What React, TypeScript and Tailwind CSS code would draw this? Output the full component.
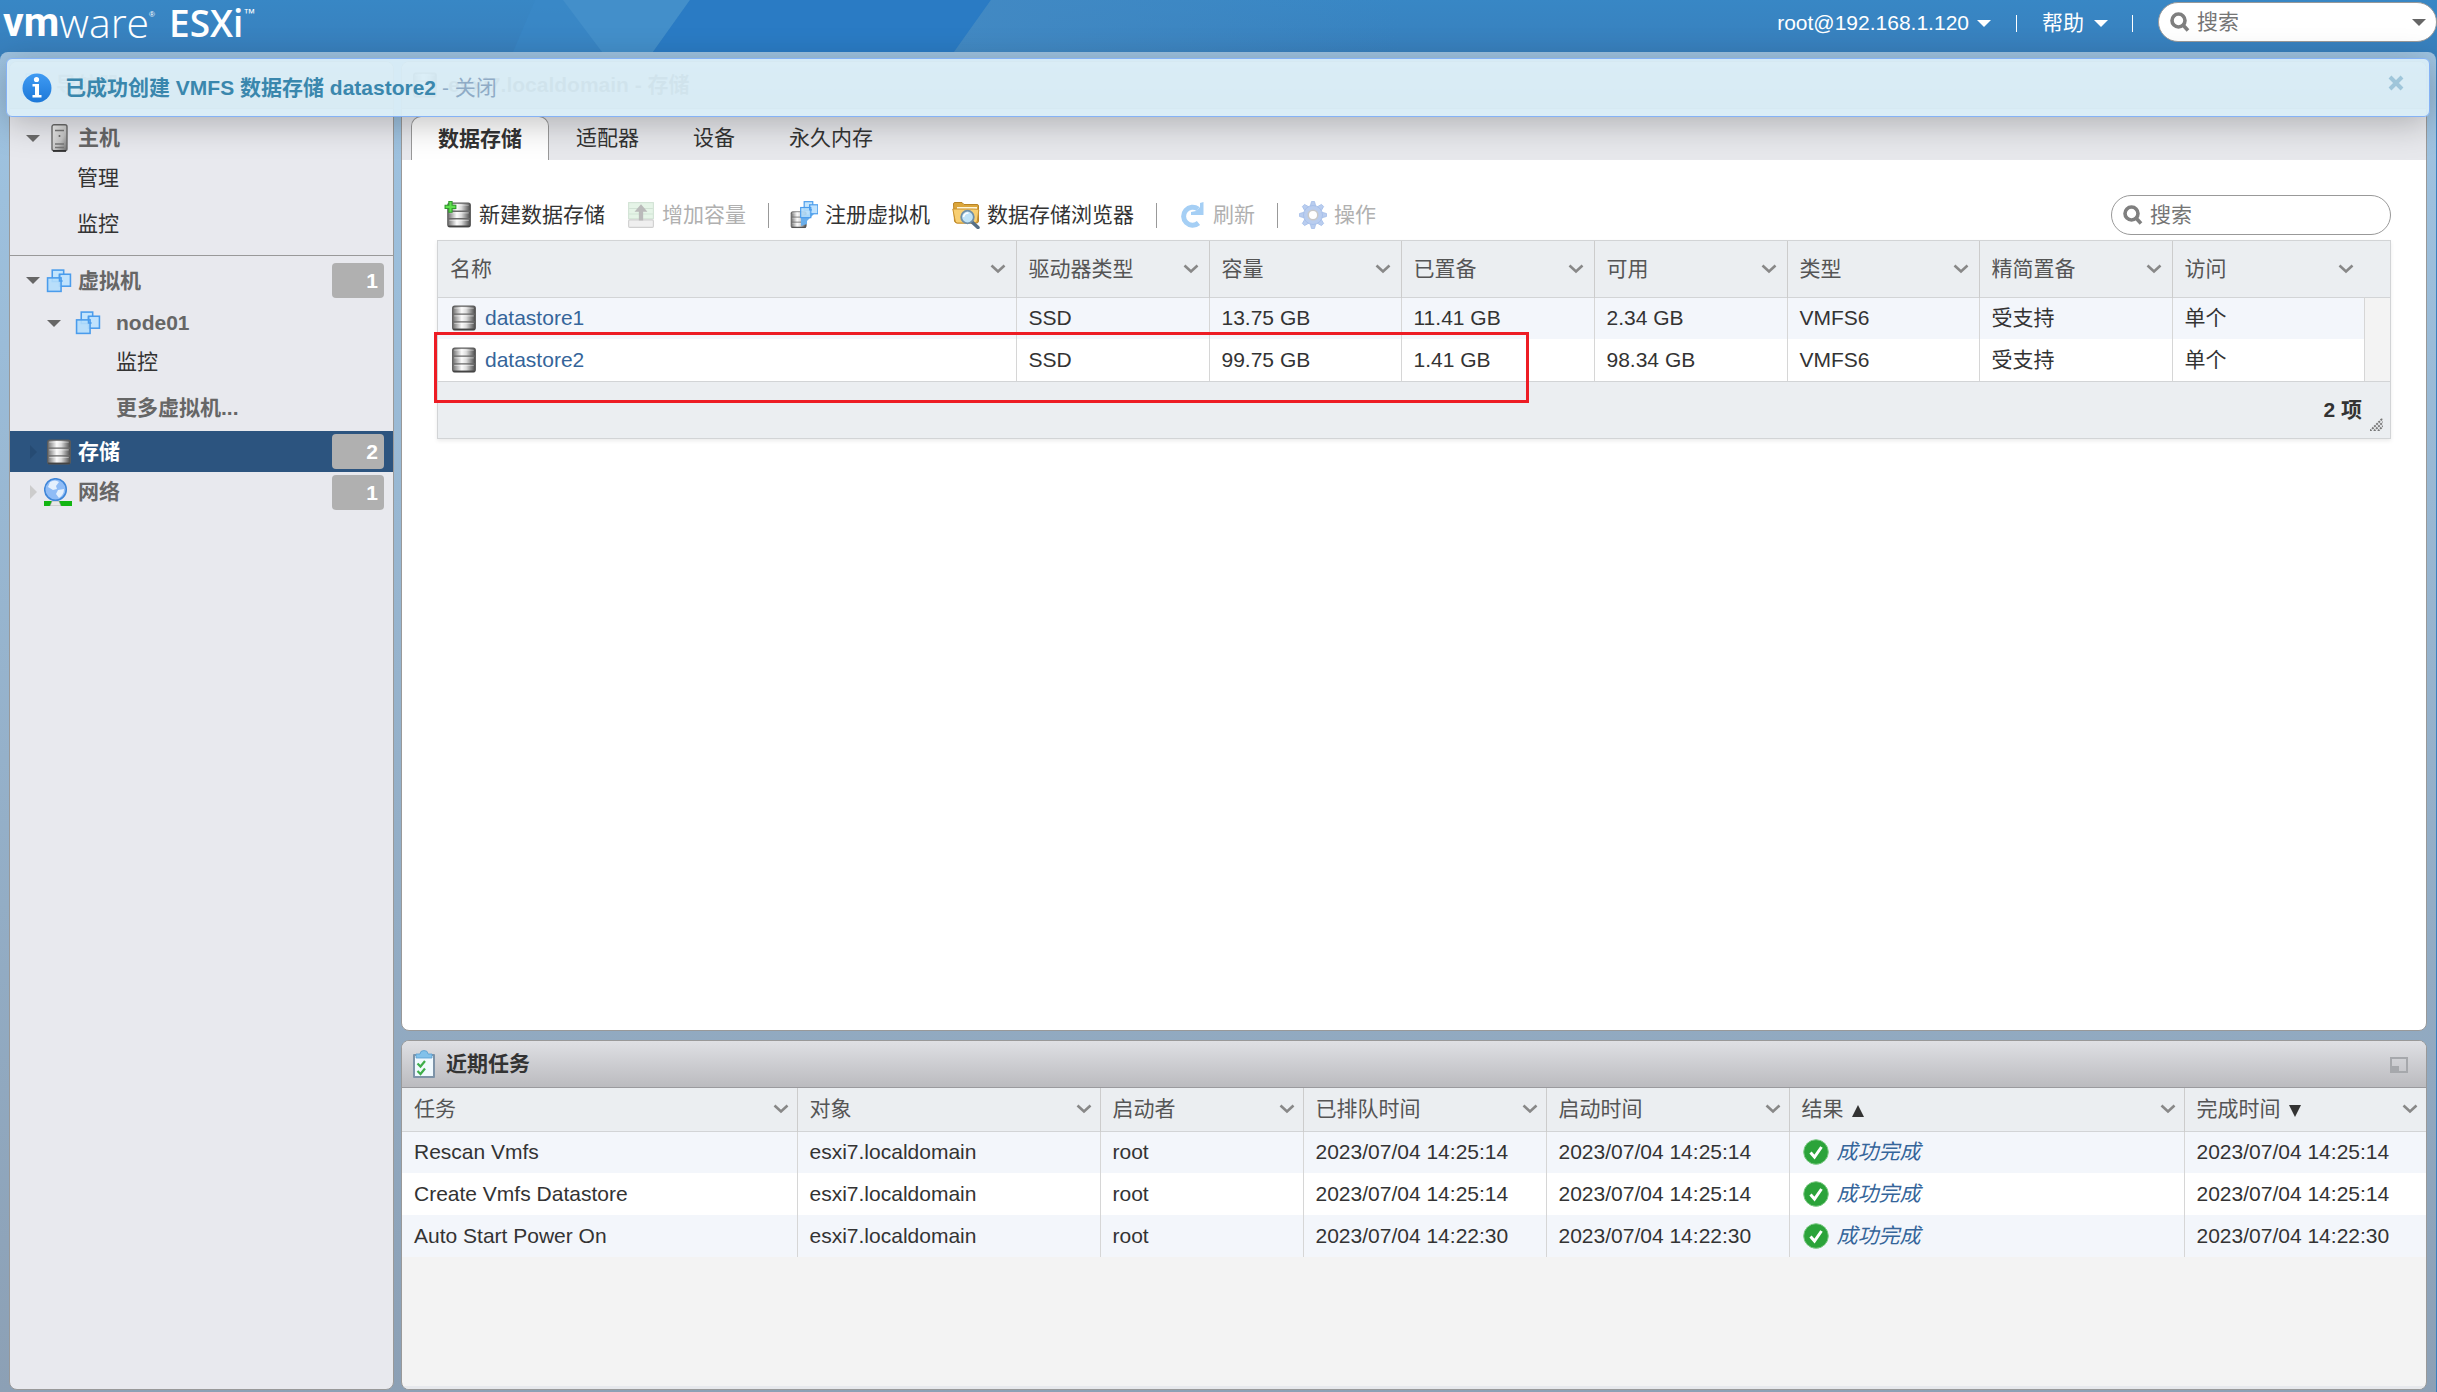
import type { ReactNode } from "react";

const datastores = [
  { name: "datastore1", drive: "SSD", capacity: "13.75 GB", provisioned: "11.41 GB", free: "2.34 GB", type: "VMFS6", thin: "受支持", access: "单个" },
  { name: "datastore2", drive: "SSD", capacity: "99.75 GB", provisioned: "1.41 GB", free: "98.34 GB", type: "VMFS6", thin: "受支持", access: "单个" },
];

const tasks = [
  { name: "Rescan Vmfs", target: "esxi7.localdomain", by: "root", queued: "2023/07/04 14:25:14", started: "2023/07/04 14:25:14", done: "2023/07/04 14:25:14" },
  { name: "Create Vmfs Datastore", target: "esxi7.localdomain", by: "root", queued: "2023/07/04 14:25:14", started: "2023/07/04 14:25:14", done: "2023/07/04 14:25:14" },
  { name: "Auto Start Power On", target: "esxi7.localdomain", by: "root", queued: "2023/07/04 14:22:30", started: "2023/07/04 14:22:30", done: "2023/07/04 14:22:30" },
];

function DiskShapes() {
  return (
    <>
      <defs>
        <linearGradient id="disk" x1="0" x2="1" y1="0" y2="0">
          <stop offset="0" stopColor="#6d6d6d" />
          <stop offset="0.4" stopColor="#fbfbfb" />
          <stop offset="0.6" stopColor="#dcdcdc" />
          <stop offset="1" stopColor="#484848" />
        </linearGradient>
      </defs>
      <rect x="1.5" y="1" width="21" height="22" rx="2" fill="url(#disk)" stroke="#5c5c5c" />
      <path d="M2 8.5h20M2 15.5h20" stroke="#6a6a6a" strokeWidth="1.2" />
      <path d="M3 3h18M3 10h18M3 17h18" stroke="#fff" strokeOpacity=".4" />
      <path d="M2 22.5h20" stroke="#444" strokeWidth="1.5" />
    </>
  );
}

function DatastoreIcon() {
  return (
    <svg className="size-[26px] shrink-0" viewBox="0 0 24 24">
      <DiskShapes />
    </svg>
  );
}

function NewDatastoreIcon() {
  return (
    <svg className="size-7 shrink-0" viewBox="-2 -1 26 26">
      <DiskShapes />
      <path d="M2.5-.5h3V3H9v3H5.500v3.500h-3V6H-1V3h3.500z" fill="#5fe04f" stroke="#2f9a2b" />
    </svg>
  );
}

function IncreaseIcon() {
  return (
    <svg className="size-7 shrink-0 opacity-40" viewBox="0 0 26 26">
      <rect x="1.5" y="1.5" width="23" height="15" fill="#bfe6c4" stroke="#8fb996" />
      <path d="M2 7h22M2 12h22" stroke="#8fb996" />
      <rect x="1.5" y="17.5" width="23" height="7" rx="1" fill="#d8d8d8" stroke="#8a8a8a" />
      <path d="M13 3l6 7h-4v8h-4v-8H7z" fill="#555" />
    </svg>
  );
}

function VmSquares() {
  return (
    <g stroke="#4a9cec" strokeWidth="1.5">
      <rect x="6" y="1.5" width="11" height="11" fill="#c3e5fd" />
      <rect x="13" y="5.5" width="10.5" height="11.5" fill="#bfe2fd" />
      <rect x="1.5" y="9" width="13" height="13" fill="#b3ddfb" fillOpacity=".9" />
      <path d="M13 5.5V12h3" fill="none" />
    </g>
  );
}

function VmIcon() {
  return (
    <svg className="size-[26px] shrink-0" viewBox="0 0 25 24">
      <VmSquares />
    </svg>
  );
}

function RegisterVmIcon() {
  return (
    <svg className="size-7 shrink-0" viewBox="0 0 28 28">
      <g transform="translate(0 10) scale(.72)">
        <DiskShapes />
      </g>
      <path d="M11 15l14-3-8 8v3l-6 2z" fill="#6aaeea" />
      <g transform="translate(9.500 -.5) scale(.78)">
        <VmSquares />
      </g>
    </svg>
  );
}

function BrowserIcon() {
  return (
    <svg className="size-7 shrink-0" viewBox="0 0 28 28">
      <path d="M1.500 3q0-1.500 1.500-1.500h7l2 2h13q1.500 0 1.500 1.500v15q0 2-2 2H5q-2 0-2.500-2z" fill="#dba53a" stroke="#b98425" />
      <path d="M5 6h20v4H5z" fill="#fff6d8" />
      <path d="M.8 8h20.500q5.500 0 5.500 1l-1.500 11q-.5 2-2.500 2H5.500q-2 0-2.300-2z" fill="#f8cf72" stroke="#c8912e" />
      <path d="M20 21l6 5.500" stroke="#566f86" strokeWidth="3.5" strokeLinecap="round" />
      <circle cx="15.5" cy="16" r="6.3" fill="#bfe3f8" stroke="#6f8fa8" strokeWidth="1.8" />
      <path d="M11.500 16q1-4 5-4" stroke="#fff" strokeWidth="1.5" fill="none" />
    </svg>
  );
}

function RefreshIcon() {
  return (
    <svg className="size-7 shrink-0" viewBox="0 0 28 28">
      <path d="M20.500 22A9 9 0 1 1 20 8" fill="none" stroke="#a5cff5" strokeWidth="5" />
      <path d="M25.500 1v13H13v-3l5-1 4-4V2z" fill="#a5cff5" />
    </svg>
  );
}

function GearIcon() {
  return (
    <svg className="size-7 shrink-0" viewBox="0 0 28 28">
      <g fill="#b9cdef" stroke="#a3bde8" strokeWidth=".8">
        {[0, 45, 90, 135, 180, 225, 270, 315].map((a) => (
          <path key={a} d="M11 6l1.500-5.500h3L17 6z" transform={`rotate(${a} 14 14)`} />
        ))}
        <circle cx="14" cy="14" r="9.5" />
      </g>
      <circle cx="14" cy="14" r="4.8" fill="#fff" stroke="#c9c9c9" strokeWidth="1.6" />
    </svg>
  );
}

function HostIcon() {
  return (
    <svg className="h-[28px] w-[26px] shrink-0" viewBox="0 0 26 28">
      <defs>
        <linearGradient id="host" x1="0" x2="1" y1="0" y2="1">
          <stop offset="0" stopColor="#f4f4f4" />
          <stop offset="0.6" stopColor="#c4c4c4" />
          <stop offset="1" stopColor="#6c6c6c" />
        </linearGradient>
      </defs>
      <rect x="6" y=".8" width="15" height="26" rx="2" fill="url(#host)" stroke="#6a6a6a" strokeWidth="1.4" />
      <path d="M9 6.500h9M9 20h9M9 23.500h9" stroke="#777" strokeWidth="1.4" />
      <circle cx="13.5" cy="12" r="1" fill="#666" />
      <path d="M7 27h13" stroke="#222" strokeWidth="1.5" />
    </svg>
  );
}

function NetworkIcon() {
  return (
    <svg className="size-7 shrink-0" viewBox="0 0 28 28">
      <path d="M0 23h28v5H0z" fill="#12b512" />
      <path d="M6 28l2-5h7l2 5z" fill="#e8e8e8" stroke="#999" strokeWidth=".6" />
      <circle cx="11.5" cy="11.5" r="10.8" fill="#8fbcf6" stroke="#3f86d8" strokeWidth="1.5" />
      <path d="M6 4q5-3 9 0l-3 4 1 3-4 1-5-3zM14 12l6-1q0 6-5 9l-3-4z" fill="#e4f0fd" />
    </svg>
  );
}

function InfoIcon() {
  return (
    <svg className="size-[30px] shrink-0" viewBox="0 0 30 30">
      <defs>
        <linearGradient id="info" x1="0" x2="0" y1="0" y2="1">
          <stop offset="0" stopColor="#3f9bf3" />
          <stop offset="1" stopColor="#1d78d8" />
        </linearGradient>
      </defs>
      <circle cx="15" cy="15" r="14.5" fill="url(#info)" />
      <circle cx="14.5" cy="6.5" r="2.6" fill="#fff" />
      <path d="M10.500 11h6.500v11h2.500v2.500h-9V22H13v-8.500h-2.500z" fill="#fff" />
    </svg>
  );
}

function TasksIcon() {
  return (
    <svg className="h-[29px] w-6 shrink-0" viewBox="0 0 24 29">
      <rect x="1" y="4" width="22" height="24" rx="1" fill="#7d93a8" />
      <rect x="3" y="6" width="18" height="20" fill="#f0f9fe" />
      <path d="M4 4h4q0-3.500 4-3.500T16 4h4v4H4z" fill="#82c1ea" stroke="#5b9fd0" strokeWidth=".8" />
      <path d="M5.500 13.500l3 3 4.500-5.500M5.500 21l3 3 4.500-5.500" fill="none" stroke="#3fae4b" strokeWidth="2.2" />
    </svg>
  );
}

function SuccessIcon() {
  return (
    <svg className="size-[26px] shrink-0" viewBox="0 0 26 26">
      <circle cx="13" cy="13" r="12.3" fill="#2ba33a" stroke="#7cc884" />
      <path d="M7.500 13.500l4 4.500 7-10" fill="none" stroke="#fff" strokeWidth="3" />
    </svg>
  );
}

function SearchIcon() {
  return (
    <svg className="size-[22px] shrink-0" viewBox="0 0 22 22">
      <circle cx="9.5" cy="9.5" r="6.5" fill="none" stroke="#7f7f7f" strokeWidth="3.6" />
      <path d="M14 14l5 5.500" stroke="#7f7f7f" strokeWidth="3.6" />
    </svg>
  );
}

function Chevron() {
  return (
    <svg className="h-2.5 w-4 shrink-0" viewBox="0 0 16 10">
      <path d="M1.500 1.500L8 7.500l6.500-6" fill="none" stroke="#888" strokeWidth="2.6" />
    </svg>
  );
}

function CaretDown({ className }: { className: string }) {
  return (
    <svg className={`h-[7px] w-3.5 shrink-0 ${className}`} viewBox="0 0 14 7">
      <path d="M0 0h14L7 7z" fill="currentColor" />
    </svg>
  );
}

function CaretRight({ className }: { className: string }) {
  return (
    <svg className={`h-3.5 w-[7px] shrink-0 ${className}`} viewBox="0 0 7 14">
      <path d="M0 0v14l7-7z" fill="currentColor" />
    </svg>
  );
}

function ColumnHead({ label, sort, tight }: { label: string; sort?: "up" | "down"; tight?: boolean }) {
  return (
    <div className={`flex items-center justify-between pl-3 ${tight ? "pr-2" : "pr-2.5"}`}>
      <span className="flex items-center gap-2">
        {label}
        {sort && (
          <svg className="mt-1 size-3" viewBox="0 0 12 12">
            <path d={sort === "up" ? "M0 12L6 0l6 12z" : "M0 0l6 12 6-12z"} fill="#333" />
          </svg>
        )}
      </span>
      <Chevron />
    </div>
  );
}

function PanelTitle({ icon, children }: { icon: ReactNode; children: ReactNode }) {
  return (
    <div className="flex h-[47px] shrink-0 items-center gap-2.5 border-b border-[#9a9a9e] bg-linear-to-b from-[#dfe0e4] to-[#bbbbbf] px-2.5">
      {icon}
      <h2 className="font-bold">{children}</h2>
    </div>
  );
}

function ToolButton({ icon, label, disabled }: { icon: ReactNode; label: string; disabled?: boolean }) {
  return (
    <button type="button" disabled={disabled} className="flex items-center gap-[7px] text-[#333] disabled:text-[#b0b0b0]">
      {icon}
      {label}
    </button>
  );
}

function Divider() {
  return <span className="-mr-px h-[25px] w-px bg-[#999]" />;
}

function Badge({ count }: { count: number }) {
  return <span className="ml-auto h-[35px] w-[52px] rounded bg-[#b0b0b0] pr-1.5 text-right leading-[35px] font-bold text-white">{count}</span>;
}

function Header() {
  return (
    <header className="relative flex h-[52px] shrink-0 items-start justify-between bg-linear-to-b from-[#3887c5] to-[#3880bd] text-white">
      <svg className="absolute inset-y-0 left-0 h-full w-[1400px]" viewBox="0 0 1400 52" preserveAspectRatio="none">
        <defs>
          <linearGradient id="facet" x1="0" x2="1" y1="0" y2="0">
            <stop offset="0" stopColor="#4289c3" />
            <stop offset="1" stopColor="#4289c3" stopOpacity="0" />
          </linearGradient>
        </defs>
        <path d="M535 0h30l37 52H513z" fill="#3a8aca" fillOpacity=".5" />
        <path d="M563 0h127l-37 52h-51z" fill="#438fca" />
        <path d="M690 0h301l-37 52H653z" fill="#2a7bc4" />
        <path d="M991 0h409v52H954z" fill="url(#facet)" />
      </svg>
      <h1 className="relative flex pl-[3px] text-[41px] leading-[44px]">
        <span className="font-[Roboto] font-bold">vm</span>
        <span className="font-['Open_Sans'] font-light">ware</span>
        <span className="mt-2 text-[8px] leading-[14px]">®</span>
        <span className="ml-3.5 font-['Open_Sans'] text-[37px] leading-[46px] font-semibold">ESXi</span>
        <span className="mt-1.5 text-[12px] leading-[14px]">™</span>
      </h1>
      <nav className="relative flex h-[46px] items-center">
        <button type="button" className="flex items-center gap-2">
          root@192.168.1.120
          <CaretDown className="text-white" />
        </button>
        <span className="mx-[25px] h-[17px] w-px bg-white" />
        <button type="button" className="flex items-center gap-2.5">
          帮助
          <CaretDown className="text-white" />
        </button>
        <span className="mr-[25px] ml-6 h-[17px] w-px bg-white" />
        <label className="mt-0.5 flex h-10 w-[279px] items-center gap-1.5 self-start rounded-[20px] border border-[#999] bg-white pr-2.5 pl-2.5">
          <SearchIcon />
          <input aria-label="搜索" placeholder="搜索" className="min-w-0 flex-1 text-[#333] outline-none placeholder:text-[#757575]" />
          <CaretDown className="text-[#666]" />
        </label>
      </nav>
    </header>
  );
}

function Banner() {
  return (
    <div className="absolute top-1.5 right-1.5 left-1.5 z-10 flex h-[59px] items-center rounded-md border border-[#85b2f5] bg-[#d9edf7]/95 pl-[15px] shadow-[0_6px_34px_rgba(0,0,0,0.25)]">
      <InfoIcon />
      <p className="ml-[13px] text-[#8fabc6]">
        <strong className="text-[#3a87ad]">已成功创建 VMFS 数据存储 datastore2</strong>
        {" - "}
        <a href="#close">关闭</a>
      </p>
      <button type="button" aria-label="关闭" className="mr-[25px] mb-2.5 ml-auto text-[#9fc6da]">
        <svg className="size-4" viewBox="0 0 16 16">
          <path d="M2 2l12 12M14 2L2 14" stroke="currentColor" strokeWidth="4" />
        </svg>
      </button>
    </div>
  );
}

function Sidebar() {
  return (
    <aside className="flex w-[385px] shrink-0 flex-col overflow-hidden rounded-lg border border-[#999] bg-[#e8e9ee] font-bold text-[#666]">
      <PanelTitle icon={<VmIcon />}>导航器</PanelTitle>
      <div className="border-b border-[#999] pt-[9px] pb-[9px]">
        <div className="flex h-10 items-center gap-1.5 pl-4">
          <CaretDown className="text-[#6b6b6b]" />
          <HostIcon />
          <a href="#host">主机</a>
        </div>
        <a href="#manage" className="block h-[43px] pl-[67px] leading-[40px] font-normal text-[#333]">管理</a>
        <a href="#monitor" className="block h-[45px] pl-[67px] leading-[46px] font-normal text-[#333]">监控</a>
      </div>
      <div className="flex h-[47px] items-center gap-1.5 pt-0.5 pr-[9px] pl-4">
        <CaretDown className="text-[#666]" />
        <VmIcon />
        <a href="#vms">虚拟机</a>
        <Badge count={1} />
      </div>
      <div className="flex h-10 items-center pl-[37px]">
        <CaretDown className="text-[#666]" />
        <span className="ml-3.5 flex"><VmIcon /></span>
        <a href="#node01" className="ml-[15px]">node01</a>
      </div>
      <a href="#node01-monitor" className="h-10 pl-[106px] leading-[38px] font-normal text-[#333]">监控</a>
      <a href="#more" className="h-12 pl-[106px] leading-[50px]">更多虚拟机...</a>
      <div className="flex h-[41px] items-center gap-1.5 bg-[#2c547f] pr-[9px] pl-5 text-white">
        <CaretRight className="text-[#264b73]" />
        <span className="ml-[3px] flex"><DatastoreIcon /></span>
        <a href="#storage">存储</a>
        <Badge count={2} />
      </div>
      <div className="flex h-10 items-center gap-1.5 pr-[9px] pl-5">
        <CaretRight className="text-[#ccc]" />
        <span className="ml-px flex"><NetworkIcon /></span>
        <a href="#network">网络</a>
        <Badge count={1} />
      </div>
    </aside>
  );
}

function StoragePanel() {
  return (
    <main className="flex min-h-0 flex-1 flex-col overflow-hidden rounded-lg border border-[#999] bg-white">
      <PanelTitle icon={<DatastoreIcon />}>esxi7.localdomain - 存储</PanelTitle>
      <div role="tablist" className="flex bg-[#e7e8ec] pt-[7px] pl-[9px]">
        <button type="button" role="tab" aria-selected="true" className="h-11 rounded-t-[10px] border border-b-0 border-[#999] bg-white px-[26px] font-bold">数据存储</button>
        <button type="button" role="tab" className="px-[27px]">适配器</button>
        <button type="button" role="tab" className="px-[27px]">设备</button>
        <button type="button" role="tab" className="px-[27px]">永久内存</button>
      </div>
      <div className="px-[35px] pt-[35px]">
        <div className="flex items-center justify-between pb-[5px] pl-[7px]">
          <div className="flex items-center gap-[22px]">
            <ToolButton icon={<NewDatastoreIcon />} label="新建数据存储" />
            <ToolButton icon={<IncreaseIcon />} label="增加容量" disabled />
            <Divider />
            <ToolButton icon={<RegisterVmIcon />} label="注册虚拟机" />
            <ToolButton icon={<BrowserIcon />} label="数据存储浏览器" />
            <Divider />
            <ToolButton icon={<RefreshIcon />} label="刷新" disabled />
            <Divider />
            <ToolButton icon={<GearIcon />} label="操作" disabled />
          </div>
          <label className="flex h-10 w-[280px] items-center gap-1.5 rounded-[20px] border border-[#999] px-2.5">
            <SearchIcon />
            <input aria-label="搜索" placeholder="搜索" className="min-w-0 flex-1 outline-none placeholder:text-[#757575]" />
          </label>
        </div>
        <div className="relative border border-[#d2d4d6] bg-[#ebeef1] shadow-[0_2px_4px_rgba(0,0,0,0.08)]">
          <table className="w-full table-fixed border-collapse text-left">
            <colgroup>
              <col />
              <col className="w-[193px]" />
              <col className="w-[192px]" />
              <col className="w-[193px]" />
              <col className="w-[193px]" />
              <col className="w-[192px]" />
              <col className="w-[193px]" />
              <col className="w-[192px]" />
              <col className="w-[26px]" />
            </colgroup>
            <thead>
              <tr className="h-14 border-b border-[#d2d4d6] text-[#555]">
                {["名称", "驱动器类型", "容量", "已置备", "可用", "类型", "精简置备"].map((label) => (
                  <th key={label} className="border-r border-[#ccc] font-normal">
                    <ColumnHead label={label} />
                  </th>
                ))}
                <th className="font-normal">
                  <ColumnHead label="访问" />
                </th>
                <td />
              </tr>
            </thead>
            <tbody>
              {datastores.map((d) => (
                <tr key={d.name} className="h-[42px] bg-white odd:bg-[#f3f6fb]">
                  <td className="border-r border-[#d6d6d6] pl-[13px]">
                    <a href={`#${d.name}`} className="flex items-center gap-2 text-[#35659a]">
                      <DatastoreIcon />
                      {d.name}
                    </a>
                  </td>
                  {[d.drive, d.capacity, d.provisioned, d.free, d.type, d.thin, d.access].map((value, i) => (
                    <td key={i} className="border-r border-[#d6d6d6] pl-3">{value}</td>
                  ))}
                  <td className="bg-[#f3f3f3]" />
                </tr>
              ))}
            </tbody>
          </table>
          <div className="flex h-[57px] items-center justify-end border-t border-[#d2d4d6] pr-[7px] font-bold">
            2 项
            <svg className="mt-7 ml-2 size-[13px]" viewBox="0 0 13 13">
              <path d="M0 13L13 0M4 13l9-9M8 13l5-5" stroke="#777" strokeWidth="2" strokeDasharray="2 1" />
            </svg>
          </div>
          <div className="pointer-events-none absolute top-[91px] right-[861px] -left-1 h-[71px] border-3 border-[#ed1c24]" />
        </div>
      </div>
    </main>
  );
}

function TasksPanel() {
  return (
    <section className="flex h-[350px] shrink-0 flex-col overflow-hidden rounded-lg border border-[#999] bg-[#f3f3f3]">
      <div className="relative">
        <PanelTitle icon={<TasksIcon />}>近期任务</PanelTitle>
        <button type="button" aria-label="最小化" className="absolute top-4 right-[18px]">
          <svg className="h-4 w-[18px]" viewBox="0 0 18 16">
            <rect x="1" y="1" width="16" height="14" fill="none" stroke="#a6a8ac" strokeWidth="2" />
            <rect x="1" y="9" width="8" height="6" fill="#a6a8ac" />
          </svg>
        </button>
      </div>
      <table className="w-full table-fixed border-collapse text-left">
        <colgroup>
          <col />
          <col className="w-[303px]" />
          <col className="w-[203px]" />
          <col className="w-[243px]" />
          <col className="w-[243px]" />
          <col className="w-[395px]" />
          <col className="w-[242px]" />
        </colgroup>
        <thead>
          <tr className="h-[43px] border-b border-[#d2d4d6] bg-[#ebeef1] text-[#555]">
            {["任务", "对象", "启动者", "已排队时间", "启动时间"].map((label) => (
              <th key={label} className="border-r border-[#ccc] font-normal">
                <ColumnHead label={label} tight />
              </th>
            ))}
            <th className="border-r border-[#ccc] font-normal">
              <ColumnHead label="结果" sort="up" tight />
            </th>
            <th className="font-normal">
              <ColumnHead label="完成时间" sort="down" tight />
            </th>
          </tr>
        </thead>
        <tbody>
          {tasks.map((t) => (
            <tr key={t.name} className="h-[42px] bg-white odd:bg-[#f3f6fb]">
              {[t.name, t.target, t.by, t.queued, t.started].map((value, i) => (
                <td key={i} className="border-r border-[#d6d6d6] pl-3">{value}</td>
              ))}
              <td className="border-r border-[#d6d6d6] pl-[13px]">
                <a href="#result" className="flex items-center gap-2 text-[#35659a] italic">
                  <SuccessIcon />
                  成功完成
                </a>
              </td>
              <td className="pl-3">{t.done}</td>
            </tr>
          ))}
        </tbody>
      </table>
      <div className="mt-auto h-[3px] bg-[#e6e8ec]" />
    </section>
  );
}

export default function App() {
  return (
    <div className="flex h-screen flex-col bg-[#3880bd] font-['Liberation_Sans','Noto_Sans_CJK_SC',sans-serif] text-[21px] leading-[30px] text-[#333]">
      <Header />
      <div className="relative mr-px flex min-h-0 flex-1 gap-[7px] rounded-t-lg bg-linear-to-b from-[#9fc4e2] to-[#8ca0b5] pt-[9px] pr-[9px] pb-0.5 pl-[9px]">
        <Banner />
        <Sidebar />
        <div className="flex min-w-0 flex-1 flex-col gap-[9px]">
          <StoragePanel />
          <TasksPanel />
        </div>
      </div>
    </div>
  );
}
